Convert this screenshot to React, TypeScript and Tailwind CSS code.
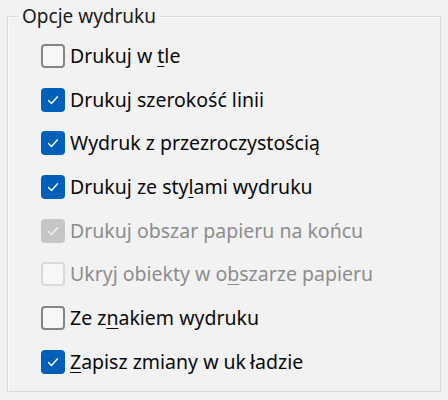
import React from "react";

type Item = {
  label: React.ReactNode;
  checked: boolean;
  disabled?: boolean;
};

const U = ({ children }: { children: React.ReactNode }) => (
  <span className="underline underline-offset-[3px] decoration-1">{children}</span>
);

const items: Item[] = [
  { label: <>Drukuj w <U>t</U>le</>, checked: false },
  { label: "Drukuj szerokość linii", checked: true },
  { label: "Wydruk z przezroczystością", checked: true },
  { label: <>Drukuj ze sty<U>l</U>ami wydruku</>, checked: true },
  { label: "Drukuj obszar papieru na końcu", checked: true, disabled: true },
  { label: <>Ukryj obiekty w o<U>b</U>szarze papieru</>, checked: false, disabled: true },
  { label: <>Ze z<U>n</U>akiem wydruku</>, checked: false },
  { label: <><U>Z</U>apisz zmiany w uk<span className="ml-[4px]">ładzie</span></>, checked: true },
];

const Box = ({ checked, disabled }: { checked: boolean; disabled?: boolean }) => {
  if (checked) {
    return (
      <div
        className={
          "w-6 h-6 rounded-[4px] flex items-center justify-center shrink-0 " +
          (disabled ? "bg-[#c6c6c6]" : "bg-[#005fb8]")
        }
      >
        <svg width="14" height="14" viewBox="0 0 14 14" fill="none">
          <path
            d="M2.5 7.5 L5.5 10.5 L11.5 3.8"
            stroke={disabled ? "#f3f3f3" : "#ffffff"}
            strokeWidth="1.4"
            strokeLinecap="round"
            strokeLinejoin="round"
          />
        </svg>
      </div>
    );
  }
  return (
    <div
      className={
        "w-6 h-6 rounded-[4px] border-2 shrink-0 " +
        (disabled ? "border-[#dadada] bg-[#f7f7f7]" : "border-[#858585] bg-[#f7f7f7]")
      }
    />
  );
};

export default function App() {
  return (
    <div
      className="w-[448px] h-[400px] bg-[#f2f2f2] pt-[5px] px-[7px] text-[19.5px]"
      style={{ fontFamily: '"Noto Sans", "Open Sans", sans-serif' }}
    >
      <fieldset className="border border-[#d9d9d9] shadow-[inset_1px_1px_0_#fbfbfb] h-[387px] pl-[33px] pr-2 m-0">
        <legend className="px-[4px] -ml-[23px] leading-[22px] text-[19px] text-[#1a1a1a]">Opcje wydruku</legend>
        <div className="flex flex-col gap-[19.7px] mt-[17px]">
          {items.map((it, i) => (
            <div key={i} className="flex items-center gap-[5px] h-6">
              <Box checked={it.checked} disabled={it.disabled} />
              <span
                className={
                  "leading-6 whitespace-nowrap " +
                  (it.disabled ? "text-[#8d8d8d]" : "text-[#0a0a0a]")
                }
              >
                {it.label}
              </span>
            </div>
          ))}
        </div>
      </fieldset>
    </div>
  );
}
